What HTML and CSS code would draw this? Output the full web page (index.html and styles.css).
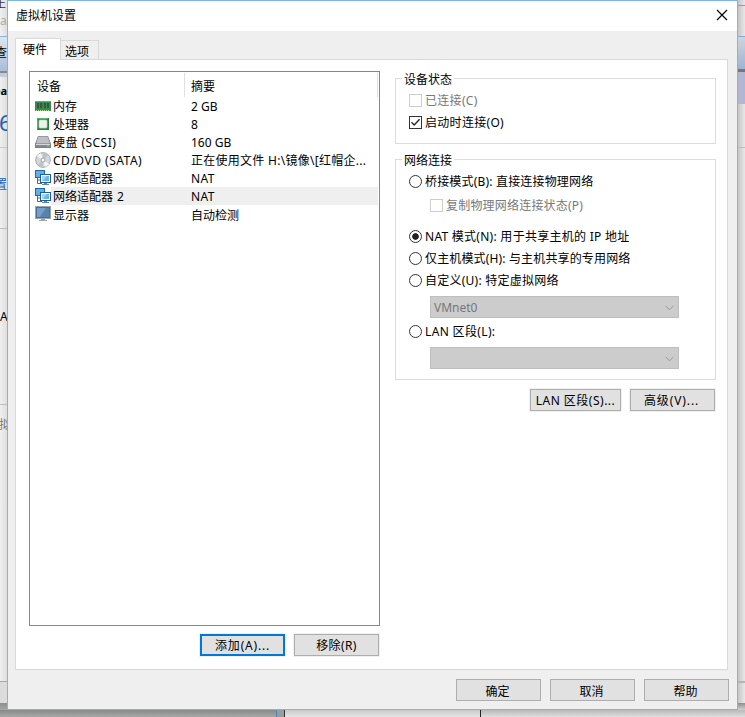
FILE: index.html
```
<!DOCTYPE html>
<html lang="zh-CN">
<head>
<meta charset="utf-8">
<title>虚拟机设置</title>
<link rel="stylesheet" href="styles.css">
</head>
<body>
<div class="desktop">
  <div class="behind behind-left">
    <div class="bl-menu"><span class="bl-top">正</span><span class="bl-sub">a</span></div>
    <div class="bl-tool">查</div>
    <div class="bl-name"><b>ea</b><span class="bl-six">6</span></div>
    <div class="bl-set">置</div>
    <div class="bl-a">A</div>
    <div class="bl-vm">拟</div>
    <div class="bl-status"></div>
  </div>
  <div class="behind behind-right">
    <div class="br-top"></div>
    <div class="br-menu"></div>
    <div class="br-tool"></div>
    <div class="br-tab"></div>
    <div class="br-band"></div>
    <div class="br-body"></div>
    <div class="br-main"></div>
    <div class="br-status"></div>
    <div class="br-rest"></div>
  </div>
  <div class="behind-bottom"><i class="bb-gray"></i><i class="bb-edge"></i><i class="bb-light"></i><i class="bb-end"></i></div>
</div>

<div class="dialog">
  <header class="titlebar">
    <span>虚拟机设置</span>
    <svg class="close" width="12" height="12" viewBox="0 0 12 12"><path d="M1 1L11 11M11 1L1 11" fill="none" stroke="#000" stroke-width="1.15"/></svg>
  </header>
  <nav class="tabs"><div class="tab active">硬件</div><div class="tab">选项</div></nav>
  <main class="panel">
    <section class="left">
      <div class="list">
        <div class="row head"><span class="name">设备</span><span class="sum">摘要</span></div>
        <div class="row">
          <svg class="ico" width="16" height="16" viewBox="0 0 16 16"><path d="M0 3h16v10H0z" fill="#2f8f49"/><path d="M0 3.5h16" stroke="#57b56e"/><path d="M2 5h2v5H2zM5 5h2v5H5zM9 5h2v5H9zM12 5h2v5h-2z" fill="#4a4c50"/><path d="M1 12.5h14" stroke="#b9d99a" stroke-dasharray="1 1"/></svg>
          <span class="name">内存</span><span class="sum">2 GB</span></div>
        <div class="row">
          <svg class="ico" width="16" height="16" viewBox="0 0 16 16"><path d="M2 2h12v12H2z" fill="#25813d"/><path d="M2.5 13V2.5H13" fill="none" stroke="#58b36a"/><rect x="4" y="4" width="8" height="8" rx="1" fill="#edf1ed" stroke="#b9d5bd" stroke-width=".7"/></svg>
          <span class="name">处理器</span><span class="sum">8</span></div>
        <div class="row">
          <svg class="ico" width="16" height="16" viewBox="0 0 16 16"><path d="M3 2h10l3 8v4H0v-4z" fill="#71757c"/><path d="M3.3 2.5h9.4L15 9.5H1z" fill="#bcc0c5"/><path d="M.5 10h15v3.5H.5z" fill="#858a92"/><path d="M1 10.5h14" stroke="#d5d8dc"/><path d="M12 11.5h2v1h-2z" fill="#70df70"/></svg>
          <span class="name scsi">硬盘 (SCSI)</span><span class="sum">160 GB</span></div>
        <div class="row">
          <svg class="ico" width="16" height="16" viewBox="0 0 16 16"><circle cx="8" cy="8" r="7.4" fill="#d4d7da" stroke="#999da2" stroke-width=".8"/><path d="M8 8L2 4A7 7 0 0 1 6 1.2zM8 8l6 4a7 7 0 0 1-4 2.8z" fill="#f5f6f7"/><path d="M8 8L8 1a7 7 0 0 1 5 2zM8 8v7a7 7 0 0 1-5-2z" fill="#bec2c6"/><circle cx="8" cy="8" r="2.5" fill="#aab0b5"/><circle cx="8" cy="8" r="1.3" fill="#fff"/></svg>
          <span class="name wide">CD/DVD (SATA)</span><span class="sum file">正在使用文件 H:\镜像\[红帽企...</span></div>
        <div class="row">
          <svg class="ico" width="16" height="16" viewBox="0 0 16 16"><path d="M0 0h10v8H0z" fill="#1f6aa5"/><path d="M1 1h8v6H1z" fill="#5fb0e6"/><path d="M2.5 8v5.5H7M2 10h3" fill="none" stroke="#4b6b87"/><path d="M5 4h11v9H5z" fill="#1d5f9a"/><path d="M6 5h9v7H6z" fill="#fff"/><path d="M7 6h7v5H7z" fill="#6bb4e6"/><path d="M7 6h5L8 11H7z" fill="#a4d5f4"/><path d="M9 13h3v1h2v1H7v-1h2z" fill="#6c8499"/></svg>
          <span class="name">网络适配器</span><span class="sum nat">NAT</span></div>
        <div class="row selected">
          <svg class="ico" width="16" height="16" viewBox="0 0 16 16"><path d="M0 0h10v8H0z" fill="#1f6aa5"/><path d="M1 1h8v6H1z" fill="#5fb0e6"/><path d="M2.5 8v5.5H7M2 10h3" fill="none" stroke="#4b6b87"/><path d="M5 4h11v9H5z" fill="#1d5f9a"/><path d="M6 5h9v7H6z" fill="#fff"/><path d="M7 6h7v5H7z" fill="#6bb4e6"/><path d="M7 6h5L8 11H7z" fill="#a4d5f4"/><path d="M9 13h3v1h2v1H7v-1h2z" fill="#6c8499"/></svg>
          <span class="name two">网络适配器 2</span><span class="sum nat">NAT</span></div>
        <div class="row last">
          <svg class="ico" width="16" height="16" viewBox="0 0 16 16"><path d="M0 0h16v13H0z" fill="#9aa5b0"/><path d="M1 1h14v11H1z" fill="#466f9b"/><path d="M2 2h12v9H2z" fill="#5684b0"/><path d="M2 2h9l-6 9H2z" fill="#759fc4"/><path d="M6 13h4v1h2v1H4v-1h2z" fill="#9aa2aa"/></svg>
          <span class="name">显示器</span><span class="sum">自动检测</span></div>
      </div>
      <div class="buttons"><button class="btn default">添加(A)...</button><button class="btn">移除(R)</button></div>
    </section>
    <section class="right">
      <div class="group status">
        <div class="legend">设备状态</div>
        <label class="opt off c"><i class="box"></i><span>已连接(C)</span></label>
        <label class="opt c"><i class="box"><svg width="11" height="11" viewBox="0 0 11 11"><path d="M1.5 5.3L4.2 8L9.6 2.2" fill="none" stroke="#222" stroke-width="1.3"/></svg></i><span>启动时连接(O)</span></label>
      </div>
      <div class="group network">
        <div class="legend">网络连接</div>
        <label class="opt b"><i class="radio"></i><span>桥接模式(B): 直接连接物理网络</span></label>
        <label class="opt off sub"><i class="box"></i><span>复制物理网络连接状态(P)</span></label>
        <label class="opt n"><i class="radio on"></i><span>NAT 模式(N): 用于共享主机的 IP 地址</span></label>
        <label class="opt h"><i class="radio"></i><span>仅主机模式(H): 与主机共享的专用网络</span></label>
        <label class="opt u"><i class="radio"></i><span>自定义(U): 特定虚拟网络</span></label>
        <div class="select"><span>VMnet0</span><svg width="9" height="6" viewBox="0 0 9 6"><path d="M.5 .8L4.5 4.8L8.5 .8" fill="none" stroke="#999"/></svg></div>
        <label class="opt lan"><i class="radio"></i><span>LAN 区段(L):</span></label>
        <div class="select"><span></span><svg width="9" height="6" viewBox="0 0 9 6"><path d="M.5 .8L4.5 4.8L8.5 .8" fill="none" stroke="#999"/></svg></div>
      </div>
      <div class="buttons net"><button class="btn seg">LAN 区段(S)...</button><button class="btn adv">高级(V)...</button></div>
    </section>
  </main>
  <footer class="buttons"><button class="btn">确定</button><button class="btn">取消</button><button class="btn">帮助</button></footer>
</div>
</body>
</html>
```

FILE: styles.css
```
* { box-sizing: border-box; }
body {
  margin: 0;
  width: 745px;
  height: 717px;
  overflow: hidden;
  font: 12px/18px "Noto Sans", "Noto Sans CJK SC", sans-serif;
  color: #000;
}
i { font-style: normal; }

/* Windows behind the dialog */
.desktop {
  height: 717px;
  display: grid;
  grid-template: 710px 7px / 7px 1fr 7px;
  background: #e6e6e6;
}
.behind { display: flex; flex-direction: column; overflow: hidden; }
.behind > div { flex: none; overflow: hidden; }
.behind-left { background: linear-gradient(90deg, #f0f0f0, #dedede); }
.bl-menu { height: 37px; border-bottom: 1px solid #8eb3d8; display: flex; flex-direction: column; }
.bl-top { height: 12px; line-height: 8px; margin-left: -6px; color: #333; }
.bl-sub { color: #aaa; line-height: 18px; }
.bl-tool { height: 40px; line-height: 32px; text-indent: -5px; background: linear-gradient(#dce6f1, #a8bdd6 34px, #8a8a8a 34px, #8a8a8a 36px, #c5c9df 36px); }
.bl-name { height: 71px; padding-top: 5px; border-bottom: 1px solid #b9cbe3; }
.bl-name b { display: block; font-size: 11px; margin-left: -6px; }
.bl-six { display: block; color: #1660b8; font-size: 22px; line-height: 28px; margin: 8px 0 0 -1px; }
.bl-set { height: 81px; padding-top: 28px; text-indent: -5px; color: #1660b8; border-bottom: 1px solid #bebebe; }
.bl-a { height: 176px; padding-top: 79px; border-bottom: 1px solid #bebebe; }
.bl-vm { height: 277px; padding-top: 11px; text-indent: -1px; color: #777; border-bottom: 1px solid #aaa; }
.bl-status { flex: 1 !important; background: linear-gradient(#dcdcdc 21px, #8c8e90 21px, #a5a7a9); }
.behind-right { grid-column: 3; background: linear-gradient(90deg, #c5c5c5, #e8e8e8); }
.br-top { height: 6px; border-bottom: 1px solid #999; }
.br-menu { height: 31px; border-bottom: 1px solid #86a8d0; }
.br-tool { height: 32px; background: linear-gradient(#cbd5df, #9eb4cf); }
.br-tab { height: 3px; background: #777; }
.br-band { height: 32px; background: #b2b6cf; }
.br-body { height: 44px; border-bottom: 1px solid #b0bdca; }
.br-main { height: 534px; border-bottom: 1px solid #b5b5b5; }
.br-status { height: 21px; border-top: 1px solid #b5b5b5; }
.br-rest { height: 7px; background: linear-gradient(#8d8d8d, #d2d2d2); }
.behind-bottom { grid-column: 1 / 4; display: flex; background: #d8d8d8; }
.bb-gray { width: 277px; background: linear-gradient(#878a8a, #a6a8a8); border-right: 1px solid #4987bd; }
.bb-edge { width: 8px; background: #999b9e; border-right: 1px solid #333; }
.bb-light { width: 196px; background: linear-gradient(#c9c9c9, #e5e5e5); border-right: 1px solid #222; }
.bb-end { flex: 1; background: linear-gradient(#b9b9b9, #dedede); }

/* Dialog */
.dialog {
  position: absolute;
  left: 7px;
  top: 0;
  width: 731px;
  height: 710px;
  border: 1px solid #7db4e9;
  background: #efefef;
}
.titlebar {
  height: 30px;
  display: flex;
  justify-content: space-between;
  align-items: center;
  padding: 0 9px 0 8px;
  background: #fff;
}
.close { margin-top: -2px; }
.tabs { display: flex; align-items: flex-end; height: 28px; padding-left: 7px; }
.tab {
  width: 38px;
  height: 19px;
  border: 1px solid #d9d9d9;
  border-width: 1px 1px 0 0;
  padding-left: 4px;
  line-height: 21px;
}
.tab.active {
  height: 22px;
  width: 46px;
  margin-bottom: -1px;
  border-left-width: 1px;
  padding-left: 7px;
  background: #fff;
  z-index: 1;
  line-height: 22px;
}
.panel {
  display: flex;
  width: 713px;
  height: 611px;
  margin-left: 7px;
  border: 1px solid #d9d9d9;
  background: #fff;
}
.left { width: 351px; margin: 11px 0 0 13px; }
.list { height: 555px; border: 1px solid #828790; background: #fff; }
.row { display: flex; height: 18px; padding-left: 5px; margin-right: 1px; line-height: 20px; white-space: nowrap; }
.row .ico { flex: none; margin-top: 1px; }
.row .name { width: 132px; padding-left: 2px; }
.row .sum { flex: 1; padding-left: 8px; }
.row .name.wide { letter-spacing: .5px; }
.row .name.scsi { letter-spacing: .45px; }
.row .name.two { word-spacing: 1px; }
.row .sum.nat { letter-spacing: .4px; }
.row .sum.file { letter-spacing: .27px; }
.row.last { line-height: 22px; }
.row.head { height: 25px; padding: 1px 0 0 7px; line-height: 27px; }
.row.head .name { width: 148px; padding: 0; border-right: 1px solid #e0e0e0; }
.row.head .sum { padding-left: 6px; border-right: 1px solid #e0e0e0; }
.row.selected { background: linear-gradient(90deg, #fff 21px, #efefef 21px); }

.buttons { display: flex; justify-content: flex-end; gap: 9px; }
.left .buttons { margin-top: 8px; padding-right: 1px; }
.btn {
  width: 85px;
  height: 22px;
  padding: 2px 0 0;
  border: 1px solid #adadad;
  background: #e1e1e1;
  color: #000;
  font: inherit;
  line-height: 18px;
  white-space: nowrap;
  box-shadow: 0 0 0 1px #f0f0f0;
}
.left .btn { letter-spacing: .4px; }
.btn.default { border: 2px solid #0078d7; line-height: 16px; }
.left .btn.default { letter-spacing: .8px; }
.btn.seg { width: 91px; letter-spacing: .5px; }
.btn.adv { letter-spacing: .9px; padding-right: 2px; }
.dialog > footer { gap: 9px; padding: 9px 8px 0 0; }
footer .btn { padding: 3px 2px 0 0; line-height: 17px; }

.right { width: 321px; margin: 18px 0 0 15px; }
.group { border: 1px solid #dcdcdc; padding-left: 13px; }
.status { height: 66px; }
.network { height: 221px; margin-top: 15px; }
.legend { width: max-content; height: 18px; margin: -9px 0 0 -7px; padding: 0 2px; line-height: 19px; background: #fff; }
.opt { display: flex; align-items: center; gap: 3px; height: 22px; white-space: nowrap; }
.legend + .opt { margin-top: 2px; }
.off { color: #787878; }
.c { letter-spacing: .3px; }
.b { letter-spacing: .18px; }
.box {
  width: 13px;
  height: 13px;
  margin-top: -1px;
  border: 1px solid #333;
  display: flex;
  background: #fff;
}
.off .box { border-color: #ccc; }
.radio { width: 13px; height: 13px; margin-top: -1px; border: 1px solid #333; border-radius: 50%; }
.radio.on { background: radial-gradient(circle, #222 2.9px, #fff 3.7px); }
.sub { margin: 2px 0 0 21px; letter-spacing: .2px; }
.n { margin-top: 9px; letter-spacing: .27px; }
.h { letter-spacing: .15px; }
.u { letter-spacing: .25px; }
.select {
  display: flex;
  justify-content: space-between;
  align-items: center;
  width: 249px;
  height: 22px;
  margin: 4px 0 0 21px;
  padding: 1px 4px 0 3px;
  border: 1px solid #bfbfbf;
  background: #ccc;
  color: #777;
}
.lan { margin-top: 3px; letter-spacing: .35px; }
.buttons.net { margin-top: 9px; padding-right: 1px; }
```
